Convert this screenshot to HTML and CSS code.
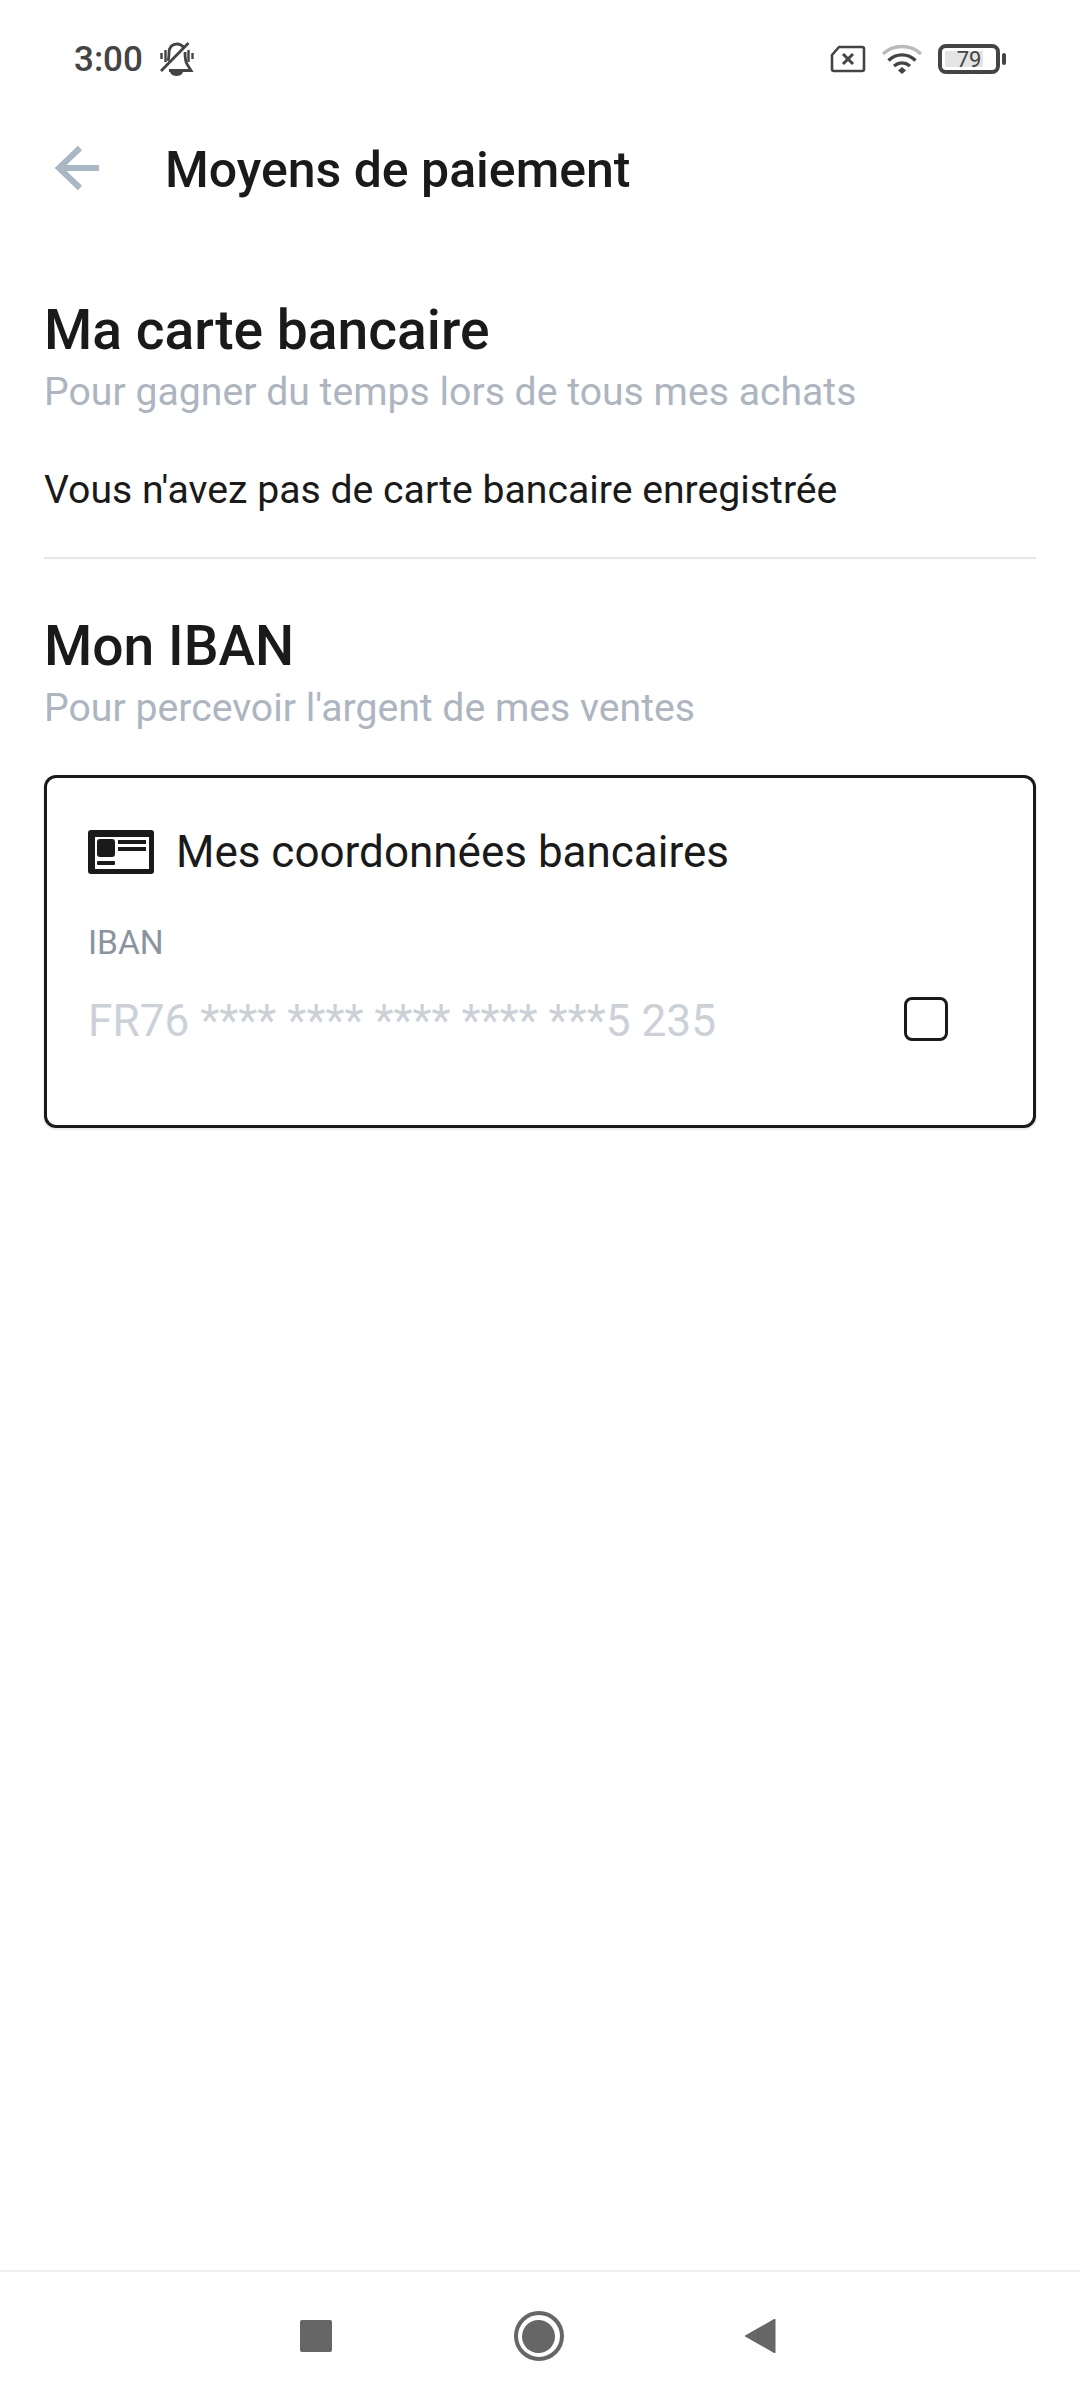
FILE: index.html
```html
<!DOCTYPE html>
<html lang="fr">
<head>
    <meta charset="UTF-8">
    <meta name="viewport" content="width=device-width, initial-scale=1.0">
    <title>Moyens de paiement</title>
    <link rel="stylesheet" href="styles.css">
</head>
<body>
    <div class="status-bar">
        <div class="status-left">
            <span class="status-time">3:00</span>
            <svg width="34" height="34" viewBox="0 0 34 34" fill="none" stroke="#444" stroke-width="2.8">
                <path d="M8 19c1-3 1-5 1-8 0-6 3-9 8-9 3 0 5 1 7 4"/>
                <path d="M25 10c0 5 0 9 2 12l4 6.500H9"/>
                <path d="M10 30h13c-1 3-4 4-6.500 4s-5.500-1-6.500-4z" fill="#444" stroke="none"/>
                <path d="M1.500 11v6M5.500 8v12M28.500 8v12M32.500 11v6" stroke-width="2.400"/>
                <path d="M28.500 1L1 29"/>
            </svg>
        </div>
        <div class="status-right">
            <svg width="36" height="28" viewBox="0 0 36 28" fill="none">
                <path d="M9 2h23a2 2 0 0 1 2 2v20a2 2 0 0 1-2 2H4a2 2 0 0 1-2-2V10z" stroke="#444" stroke-width="2.6" stroke-linejoin="round"/>
                <path d="M13 9l10 10M23 9L13 19" stroke="#444" stroke-width="3"/>
            </svg>
            <svg width="42" height="32" viewBox="0 0 42 32" fill="none">
                <path d="M2 11C12 1 30 1 40 11" stroke="#bbb" stroke-width="3.4"/>
                <path d="M7.500 17.500C15 10 27 10 34.500 17.500" stroke="#444" stroke-width="3.4"/>
                <path d="M13 23C18 19 24 19 29 23" stroke="#444" stroke-width="3.4"/>
                <path d="M17 27.500l4-3.500 4 3.500-4 3.500z" fill="#444"/>
            </svg>
            <div class="battery">
                <div class="battery-body">
                    <div class="battery-fill"></div>
                    <span class="battery-level">79</span>
                </div>
                <div class="battery-cap"></div>
            </div>
        </div>
    </div>

    <header class="top-bar">
        <svg class="back-arrow" width="46" height="46" viewBox="0 0 46 46" fill="none" stroke="#a9b8c4" stroke-width="6">
            <path d="M45 23H5M26 3L5 23l21 20"/>
        </svg>
        <h1>Moyens de paiement</h1>
    </header>

    <main class="content">
        <section class="block block-card">
            <h2>Ma carte bancaire</h2>
            <p class="subtitle">Pour gagner du temps lors de tous mes achats</p>
            <p class="empty-text">Vous n'avez pas de carte bancaire enregistrée</p>
        </section>

        <section class="block">
            <h2>Mon IBAN</h2>
            <p class="subtitle">Pour percevoir l'argent de mes ventes</p>

            <div class="iban-card">
                <div class="iban-head">
                    <svg width="66" height="44" viewBox="0 0 66 44" fill="#1a1a1a">
                        <path fill-rule="evenodd" d="M3 0h60a3 3 0 0 1 3 3v38a3 3 0 0 1-3 3H3a3 3 0 0 1-3-3V3a3 3 0 0 1 3-3zM7 7v32h54V7z"/>
                        <rect x="9" y="9" width="18" height="18" rx="3"/>
                        <rect x="9" y="31" width="18" height="4" rx="1"/>
                        <rect x="30" y="10" width="28" height="4"/>
                        <rect x="30" y="17" width="28" height="4"/>
                    </svg>
                    <span class="iban-title">Mes coordonnées bancaires</span>
                </div>
                <div class="iban-label">IBAN</div>
                <div class="iban-row">
                    <span class="iban-value">FR76 **** **** **** **** ***5 235</span>
                    <div class="checkbox"></div>
                </div>
            </div>
        </section>
    </main>

    <nav class="nav-bar">
        <div class="nav-square"></div>
        <div class="nav-home"><div class="nav-home-dot"></div></div>
        <svg width="31" height="38" viewBox="0 0 32 38">
            <path d="M30 1.500a1 1 0 0 1 1.500 1v33a1 1 0 0 1-1.500 1L1 20a1 1 0 0 1 0-2z" fill="#666"/>
        </svg>
    </nav>
</body>
</html>
```
FILE: styles.css
```css
* {
    box-sizing: border-box;
    margin: 0;
    padding: 0;
}

body {
    width: 1080px;
    height: 2400px;
    background-color: #fff;
    font-family: Roboto, sans-serif;
    color: #1a1a1a;
    display: flex;
    flex-direction: column;
    overflow: hidden;
}

.status-bar {
    height: 118px;
    padding: 0 74px;
    display: flex;
    justify-content: space-between;
    align-items: center;
}

.status-left,
.status-right {
    display: flex;
    align-items: center;
}

.status-time {
    font-size: 35px;
    font-weight: 500;
    color: #444;
    margin-right: 17px;
}

.status-right {
    gap: 15px;
}

.battery {
    display: flex;
    align-items: center;
    gap: 2px;
}

.battery-body {
    position: relative;
    width: 62px;
    height: 30px;
    border: 4px solid #444;
    border-radius: 8px;
    display: flex;
    align-items: center;
    justify-content: center;
}

.battery-fill {
    position: absolute;
    left: 3px;
    top: 3px;
    bottom: 3px;
    width: 38px;
    background-color: #e4e4e4;
}

.battery-level {
    position: relative;
    font-size: 22px;
    color: #444;
}

.battery-cap {
    width: 4px;
    height: 12px;
    background-color: #444;
    border-radius: 2px;
}

.top-bar {
    height: 104px;
    padding-left: 54px;
    display: flex;
    align-items: center;
}

.back-arrow {
    margin-right: 65px;
    margin-bottom: 4px;
}

h1 {
    font-size: 50px;
    font-weight: 500;
}

.content {
    flex: 1;
    padding: 0 44px;
}

.block {
    padding-top: 55px;
}

.block-card {
    padding-top: 76px;
    padding-bottom: 43px;
    border-bottom: 2px solid #e4e6e8;
}

h2 {
    font-size: 55.200px;
    font-weight: 500;
    line-height: 64px;
}

.subtitle {
    margin-top: 6px;
    font-size: 39.200px;
    line-height: 48px;
    color: #adb5c0;
}

.empty-text {
    margin-top: 50px;
    font-size: 39.200px;
    line-height: 48px;
}

.iban-card {
    margin-top: 43px;
    height: 353px;
    padding: 0 41px;
    border: 3px solid #1a1a1a;
    border-radius: 12px;
    box-shadow: 0 1px 3px rgba(0, 0, 0, 0.15);
}

.iban-head {
    margin-top: 48px;
    display: flex;
    align-items: center;
    gap: 22px;
}

.iban-title {
    font-size: 44px;
}

.iban-label {
    margin-top: 45px;
    font-size: 33.500px;
    line-height: 40px;
    color: #8a949e;
}

.iban-row {
    margin-top: 32px;
    display: flex;
    justify-content: space-between;
    align-items: center;
    padding-right: 44px;
}

.iban-value {
    font-size: 44.200px;
    color: #ccd1d8;
}

.checkbox {
    width: 44px;
    height: 44px;
    margin-bottom: 4px;
    border: 3px solid #1a1a1a;
    border-radius: 8px;
}

.nav-bar {
    height: 130px;
    border-top: 2px solid #eee;
    background-color: #fefefe;
    padding: 0 304px 0 300px;
    display: flex;
    justify-content: space-between;
    align-items: center;
}

.nav-square {
    width: 32px;
    height: 32px;
    background-color: #666;
    border-radius: 2px;
}

.nav-home {
    width: 50px;
    height: 50px;
    border: 4px solid #666;
    border-radius: 50%;
    display: flex;
    align-items: center;
    justify-content: center;
}

.nav-home-dot {
    width: 33px;
    height: 33px;
    background-color: #666;
    border-radius: 50%;
}
```
